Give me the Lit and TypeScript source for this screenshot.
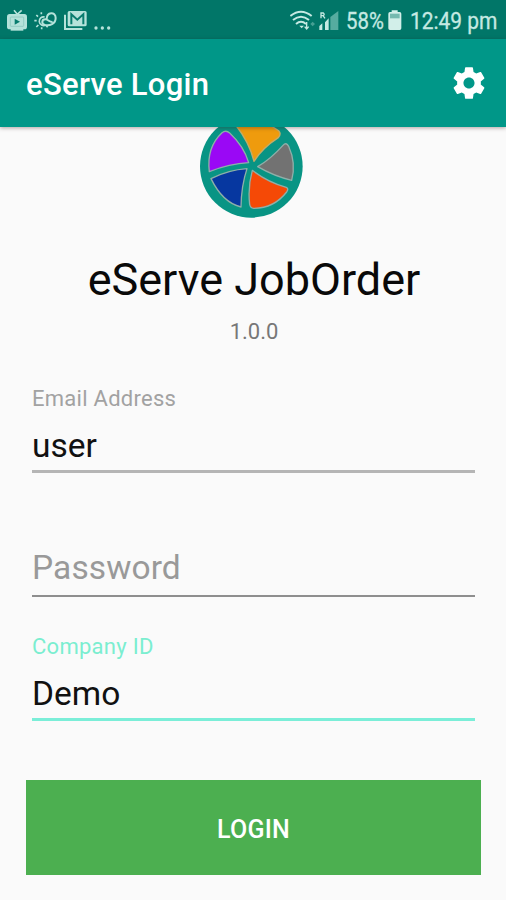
import { LitElement, html, css, nothing } from "lit";
import { customElement, property } from "lit/decorators.js";

@customElement("status-bar")
class StatusBar extends LitElement {
  static styles = css`
    :host { display: flex; justify-content: space-between; height: 39px; background: #017668; color: #c5e9e2; }
    svg { display: block; flex: none; }
    .side { display: flex; align-items: flex-start; }
    .text { font: 400 23px/27px Roboto, sans-serif; white-space: pre; padding-top: 8px; -webkit-text-stroke: 0.3px currentColor; }
    .percent { width: 38px; margin-left: 6px; }
    .time { width: 96px; margin-left: 0; }
    .text span { display: inline-block; transform-origin: 0 50%; }
    .percent span { transform: scaleX(0.885); }
    .time span { transform: scaleX(0.91); }
  `;
  render() {
    return html`
      <div class="side">
        <svg width="130" height="39" viewBox="0 0 390 117" fill="none" stroke="#b5e2da">
          <path d="M42 31l10 12 13-12" stroke-width="5" />
          <rect x="21" y="42" width="60" height="46" rx="8" fill="#b5e2da" stroke="none" />
          <rect x="31" y="51" width="40" height="28" rx="2" stroke="#82c1b8" stroke-width="2" />
          <path d="M44 56v18l16-9z" fill="#087c6e" stroke="none" />
          <path d="M32 87h38v5h-38z" fill="#b5e2da" stroke="none" />
          <path d="M134 51a13 13 0 1 0 3 24" stroke-width="5" />
          <path d="M140 58c0-24 27-24 27-4 0 18-18 24-32 21-12-3-10-17 1-17 9 0 13 10 22 8" stroke-width="6" />
          <path d="M124 37v6M109 45l5 5M103 62h7M109 81l6-6M125 82v6M143 82l-4-5" stroke-width="5" />
          <path d="M195 44v43h52" stroke-width="6" />
          <rect x="203" y="33" width="57" height="46" rx="5" fill="#b5e2da" stroke="none" />
          <path d="M214 73V43l18 16 18-16v30" stroke="#087c6e" stroke-width="6" />
          <g fill="#b5e2da" stroke="none"><circle cx="288" cy="84" r="5" /><circle cx="307" cy="84" r="5" /><circle cx="326" cy="84" r="5" /></g>
        </svg>
      </div>
      <div class="side">
        <svg width="50" height="39" viewBox="30 0 150 117" fill="none" stroke="#c5e9e2">
          <path d="M31 48q32-26 64 0M39 60q24-20 48 0M48 72q15-13 30 0" stroke-width="6" />
          <path d="M58 77h14l-7 8z" fill="#c5e9e2" stroke="none" />
          <path d="M80 66v20M74 80l6 7 6-7" stroke-width="4" />
          <path d="M91 72l7-7 7 7-7 7z" fill="#459f93" stroke="none" />
          <path d="M123 55V39h7q5 4 0 8h-7M129 47l6 8" stroke-width="4" />
          <path d="M118 90V78l9-8v20zM135 90V67l11-12v35z" fill="#c5e9e2" stroke="none" />
          <path d="M151 90V51l24-18v57z" fill="#56aca0" stroke="none" />
        </svg>
        <div class="text percent"><span>58%</span></div>
        <svg width="26" height="39" viewBox="317 0 78 117">
          <path d="M340 31h18v5h6q5 0 5 5v44q0 5-5 5h-29q-5 0-5-5V41q0-5 5-5h5z" fill="#d2efe9" />
          <path d="M335 41h29v14h-29z" fill="#75b9af" />
        </svg>
        <div class="text time"><span>12:49 pm</span></div>
      </div>`;
  }
}

@customElement("app-bar")
class AppBar extends LitElement {
  static styles = css`
    :host { display: flex; align-items: center; justify-content: space-between; box-sizing: border-box; height: 88px;
      padding: 0 18px 0 26px; background: #009788; color: #fff; position: relative; z-index: 1;
      box-shadow: 0 1px 4px rgba(60, 30, 30, 0.4); }
    h1 { margin: 3px 0 0; font: 500 31px/40px Roboto, sans-serif; letter-spacing: 0.3px; }
    svg { display: block; }
  `;
  render() {
    return html`
      <h1>eServe Login</h1>
      <svg width="38" height="38" viewBox="0 0 24 24" fill="#fff">
        <path d="M19.43 12.98c.04-.32.07-.64.07-.98s-.03-.66-.07-.98l2.11-1.65c.19-.15.24-.42.12-.64l-2-3.46c-.12-.22-.39-.3-.61-.22l-2.49 1c-.52-.4-1.08-.73-1.69-.98l-.38-2.65C14.46 2.18 14.25 2 14 2h-4c-.25 0-.46.18-.49.42l-.38 2.65c-.61.25-1.17.59-1.69.98l-2.49-1c-.23-.09-.49 0-.61.22l-2 3.46c-.13.22-.07.49.12.64l2.11 1.65c-.04.32-.07.65-.07.98s.03.66.07.98l-2.11 1.65c-.19.15-.24.42-.12.64l2 3.46c.12.22.39.3.61.22l2.49-1c.52.4 1.08.73 1.69.98l.38 2.65c.03.24.24.42.49.42h4c.25 0 .46-.18.49-.42l.38-2.65c.61-.25 1.17-.59 1.69-.98l2.49 1c.23.09.49 0 .61-.22l2-3.46c.12-.22.07-.49-.12-.64l-2.11-1.65zM12 15.5c-1.93 0-3.5-1.57-3.5-3.5s1.57-3.5 3.5-3.5 3.5 1.57 3.5 3.5-1.57 3.5-3.5 3.5z" />
      </svg>`;
  }
}

@customElement("text-field")
class TextField extends LitElement {
  @property() label = "";
  @property() value = "";
  @property({ type: Boolean, reflect: true }) active = false;
  static styles = css`
    :host { display: flex; flex-direction: column; justify-content: flex-end; box-sizing: border-box; font-family: Roboto, sans-serif;
      border-bottom: 3px solid #b5b5b5; }
    :host([active]) { border-bottom-color: #7beed8; }
    :host(.thin) { border-bottom: 2px solid #8e8e8e; }
    label { font-size: 22px; line-height: 26px; color: #a2a2a2; letter-spacing: 0.27px; margin-bottom: 14px; }
    :host([active]) label { color: #7beed0; }
    input { font: 400 33.5px/40px Roboto, sans-serif; color: #111; height: 40px; width: 100%; padding: 0; margin: 0 0 4px; border: 0; background: none; outline: 0; }
    input::placeholder { color: #999; opacity: 1; }
    :host(.thin) input { margin-bottom: 7px; letter-spacing: 0.1px; }
  `;
  render() {
    return html`
      ${this.value ? html`<label>${this.label}</label>` : nothing}
      <input .value=${this.value} placeholder=${this.label} aria-label=${this.label} />`;
  }
}

@customElement("app-root")
class AppRoot extends LitElement {
  static styles = css`
    :host { display: flex; flex-direction: column; height: 900px; overflow: hidden; background: #fafafa; font-family: Roboto, sans-serif; }
    main { display: flex; flex-direction: column; }
    .logo { display: block; width: 102.67px; height: 102.67px; margin: -12px 0 0 200px; }
    h2 { margin: 35px 0 0; padding-left: 2px; text-align: center; font-weight: 400; font-size: 45px; line-height: 54px; color: #090909; }
    .version { padding-left: 2px; text-align: center; font-size: 22px; line-height: 26px; color: #777; margin-top: 12px; }
    .fields { display: grid; grid-template-rows: 128px 124px 124px; margin: 0 31px 0 32px; }
    button { height: 95px; margin: 59px 25px 0 26px; padding: 5px 0 0; border: 0; background: #4caf50; color: #fff; font: 500 25px/30px Roboto, sans-serif; letter-spacing: 0.25px; }
  `;
  render() {
    return html`
      <status-bar></status-bar>
      <app-bar></app-bar>
      <main>
        <svg class="logo" viewBox="30 0 308 308">
          <circle cx="184" cy="154" r="154" fill="#089484" />
          <g stroke="#8eafa9" stroke-width="4" stroke-linejoin="round">
            <path d="M96 53Q108 44 119 54Q162 94 176 143Q118 146 58 170Q49 97 96 53Z" fill="#9a08f5" />
            <path d="M137 30Q205 2 266 47Q275 56 265 68Q217 99 192 139Q178 82 137 30Z" fill="#ef9b0d" stroke="#c5ab68" />
            <path d="M203 155Q242 132 279 91Q289 80 296 94Q319 145 305 196Q253 184 203 155Z" fill="#727272" />
            <path d="M63 191Q114 165 171 161Q154 212 153 276Q98 263 63 191Z" fill="#0637a0" />
            <path d="M187 166Q234 202 289 217Q297 221 290 231Q252 280 191 280Q181 279 179 268Q173 216 187 166Z" fill="#f54906" />
          </g>
        </svg>
        <h2>eServe JobOrder</h2>
        <div class="version">1.0.0</div>
        <div class="fields">
          <text-field label="Email Address" value="user"></text-field>
          <text-field class="thin" label="Password"></text-field>
          <text-field active label="Company ID" value="Demo"></text-field>
        </div>
        <button>LOGIN</button>
      </main>`;
  }
}
